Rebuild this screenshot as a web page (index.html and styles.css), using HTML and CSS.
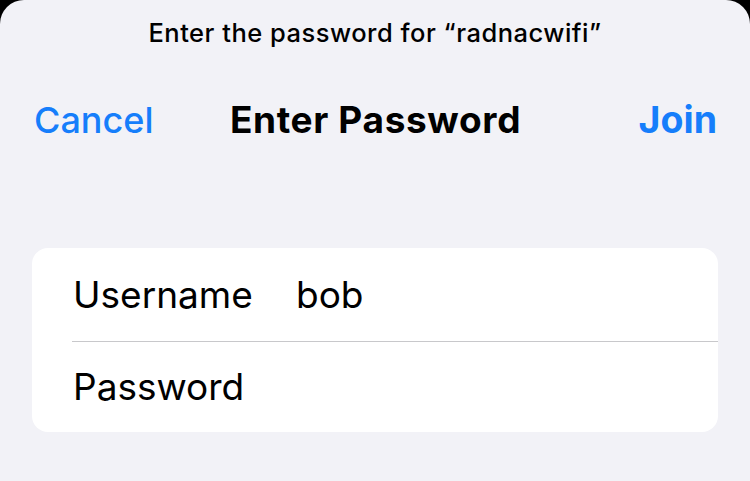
FILE: index.html
```html
<!DOCTYPE html>
<html lang="en">
<head>
<meta charset="utf-8">
<title>Enter Password</title>
<link rel="stylesheet" href="styles.css">
</head>
<body>
<div class="sheet">
  <p class="prompt">Enter the password for “radnacwifi”</p>
  <div class="navbar">
    <span class="nav-btn cancel">Cancel</span>
    <span class="nav-title">Enter Password</span>
    <span class="nav-btn join">Join</span>
  </div>
  <div class="card">
    <div class="row">
      <span class="label">Username</span>
      <span class="value">bob</span>
    </div>
    <div class="divider"></div>
    <div class="row row-last">
      <span class="label">Password</span>
      <span class="value"></span>
    </div>
  </div>
</div>
</body>
</html>
```

FILE: styles.css
```css
html, body {
  margin: 0;
  padding: 0;
  background: #000;
}
body {
  width: 750px;
  height: 481px;
  overflow: hidden;
  font-family: Inter, "Noto Sans", "Liberation Sans", sans-serif;
  color: #000;
}
.sheet {
  height: 481px;
  background: #f2f2f7;
  border-radius: 24px 24px 0 0;
  box-sizing: border-box;
  padding-top: 18px;
}
.prompt {
  margin: 0;
  text-align: center;
  font-size: 25.5px;
  line-height: 30px;
  font-weight: 500;
  letter-spacing: 0.5px;
}
.navbar {
  margin-top: 52px;
  display: grid;
  grid-template-columns: 1fr auto 1fr;
  align-items: center;
  padding: 0 33px 0 34px;
  height: 40px;
  line-height: 40px;
}
.nav-btn {
  color: #167efb;
}
.cancel {
  justify-self: start;
  font-size: 36px;
  font-weight: 500;
}
.join {
  justify-self: end;
  font-size: 37.5px;
  font-weight: 700;
}
.nav-title {
  font-size: 37px;
  font-weight: 700;
  letter-spacing: 0.65px;
}
.card {
  margin: 108px 32px 0 32px;
  background: #fff;
  border-radius: 16px;
}
.row {
  display: flex;
  align-items: center;
  height: 93px;
  line-height: 93px;
  padding-left: 41px;
  font-size: 37px;
}
.row-last {
  height: 90px;
  line-height: 90px;
}
.label {
  width: 223px;
}
.divider {
  height: 1px;
  margin-left: 40px;
  background: #c8c8cb;
}
```
